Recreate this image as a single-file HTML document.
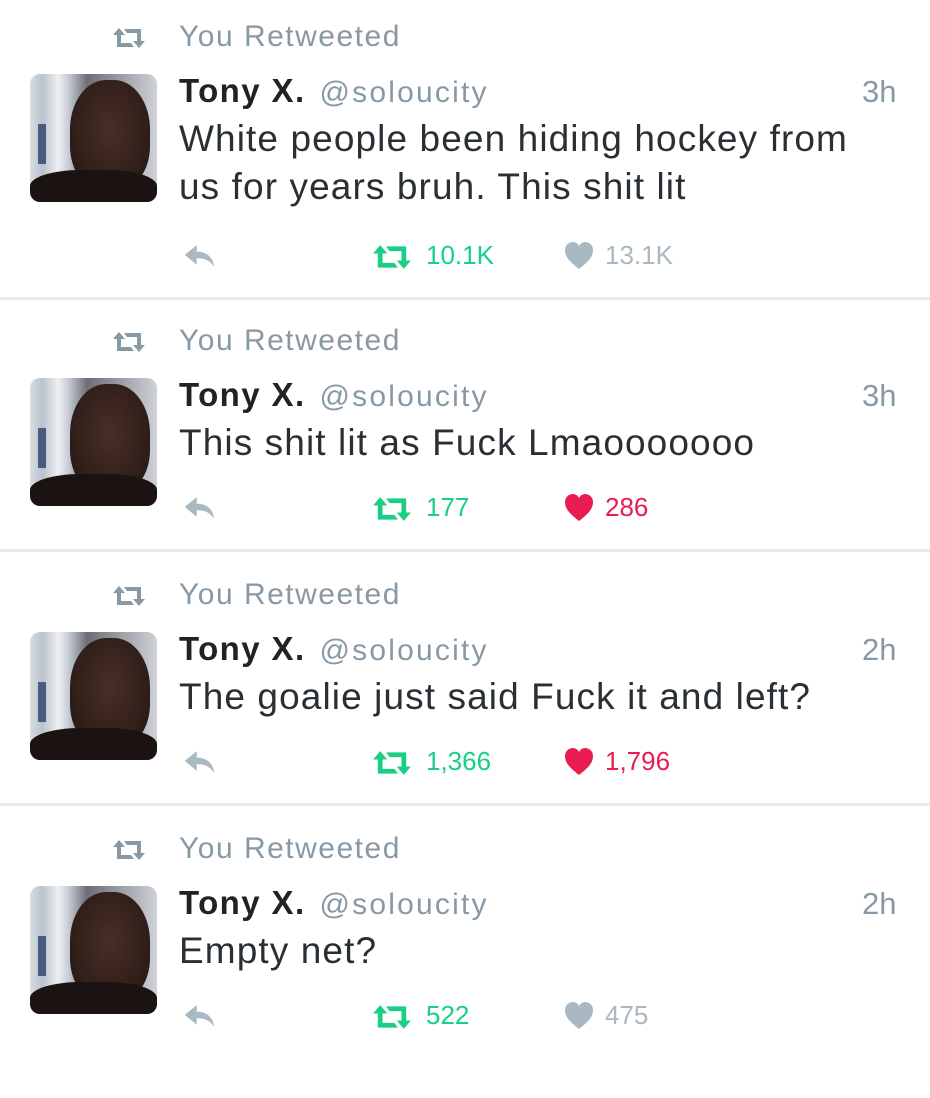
<!DOCTYPE html>
<html><head><meta charset="utf-8"><style>
body{margin:0;width:930px;height:1098px;background:#fff;position:relative;overflow:hidden;font-family:"Liberation Sans",sans-serif}
.a{position:absolute;white-space:nowrap}
.hd{font-size:30px;letter-spacing:1.5px;color:#8899a6;left:179px}
.nm{font-size:33px;letter-spacing:1.4px;color:#292f33;left:179px}
.nm b{font-weight:bold;color:#1f2326}
.nm span{color:#8899a6;font-size:30px;letter-spacing:2.2px;margin-left:14px}
.tx{font-size:37px;letter-spacing:1.1px;color:#292f33;left:179px}
.tm{font-size:31px;color:#8899a6;left:862px}
.ct{font-size:26px}
.sep{position:absolute;left:0;width:930px;height:3px;background:#e6ecf0}
.av{position:absolute;left:30px;width:127px;height:128px;border-radius:10px;overflow:hidden;
background:linear-gradient(90deg,#d8dde3 0%,#b9c2cc 10%,#eef0f2 22%,#c9ced6 30%,#6b6f75 45%,#cfd3d8 100%)}
.av .f{position:absolute;left:40px;top:6px;width:80px;height:110px;border-radius:45% 45% 40% 40%;background:radial-gradient(ellipse at 50% 45%,#4a2e25 0%,#32201b 60%,#1e1512 100%)}
.av .s{position:absolute;left:0;top:96px;width:127px;height:40px;background:#1a1311;border-radius:40% 40% 0 0}
.av .p{position:absolute;left:8px;top:50px;width:8px;height:40px;background:#4a5d80}
</style></head><body>
<svg width="0" height="0" style="position:absolute"><defs>
<symbol id="rt" viewBox="0 0 34 22"><path d="M1 8 L7 1 L13 8 H9 V16 H19 L22 20 H5 V8Z M33 14 L27 21 L21 14 H25 V6 H15 L12 2 H29 V14Z"/></symbol>
<symbol id="rp" viewBox="0 0 30 22"><path d="M12 1 L1 10 L12 19 V13 C19 13 24 15 28 21 C27 12 21 7 12 7Z"/></symbol>
<symbol id="hr" viewBox="0 0 30 28"><path d="M15 27 C6 20 1 15 1 8 C1 3 5 0 9 0 C12 0 14 2 15 4 C16 2 18 0 21 0 C25 0 29 3 29 8 C29 15 24 20 15 27Z"/></symbol>
</defs></svg>
<div id="t"></div>
<script>
var T=[
{y:0,time:"3h",lines:["White people been hiding hockey from","us for years bruh. This shit lit"],rt:"10.1K",lk:"13.1K",liked:false,sep:true},
{y:304,time:"3h",lines:["This shit lit as Fuck Lmaooooooo"],rt:"177",lk:"286",liked:true,sep:true},
{y:558,time:"2h",lines:["The goalie just said Fuck it and left?"],rt:"1,366",lk:"1,796",liked:true,sep:true},
{y:812,time:"2h",lines:["Empty net?"],rt:"522",lk:"475",liked:false,sep:false}];
var h="";
T.forEach(function(t){var y=t.y;
h+='<svg class="a" style="left:112px;top:'+(y+27)+'px" width="34" height="22" fill="#8899a6"><use href="#rt"/></svg>';
h+='<div class="a hd" style="top:'+(y+20)+'px">You Retweeted</div>';
h+='<div class="av" style="top:'+(y+74)+'px"><div class="p"></div><div class="f"></div><div class="s"></div></div>';
h+='<div class="a nm" style="top:'+(y+72)+'px"><b>Tony X.</b><span>@soloucity</span></div>';
h+='<div class="a tm" style="top:'+(y+74)+'px">'+t.time+'</div>';
t.lines.forEach(function(l,i){h+='<div class="a tx" style="top:'+(y+118+i*48)+'px">'+l+'</div>';});
var ay=y+(t.lines.length==2?255:203);
h+='<svg class="a" style="left:181px;top:'+(ay-11)+'px" width="38" height="24" fill="#aab8c2"><use href="#rp"/></svg>';
h+='<svg class="a" style="left:369px;top:'+(ay-11)+'px" width="46" height="26" fill="#19cf86"><use href="#rt"/></svg>';
h+='<div class="a ct" style="left:426px;top:'+(ay-15)+'px;color:#19cf86">'+t.rt+'</div>';
h+='<svg class="a" style="left:564px;top:'+(ay-13)+'px" width="30" height="28" fill="'+(t.liked?'#e81c4f':'#aab8c2')+'"><use href="#hr"/></svg>';
h+='<div class="a ct" style="left:605px;top:'+(ay-15)+'px;color:'+(t.liked?'#e81c4f':'#aab8c2')+'">'+t.lk+'</div>';
if(t.sep)h+='<div class="sep" style="top:'+(ay+42)+'px"></div>';
});
document.getElementById("t").innerHTML=h;
</script>
</body></html>
